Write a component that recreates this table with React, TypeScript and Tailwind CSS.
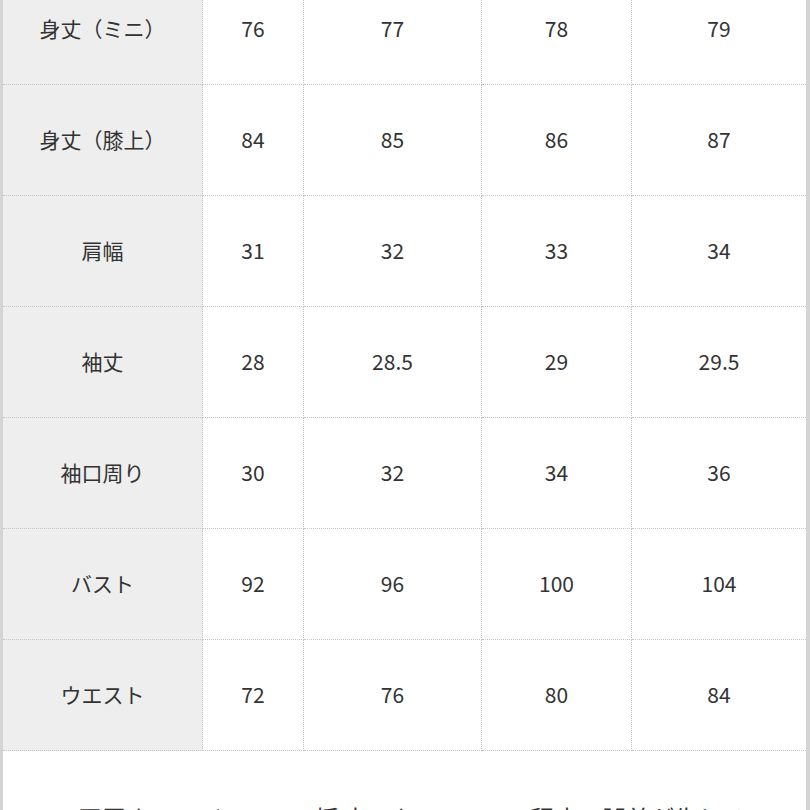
import React from "react";

const rows: { label: string; values: string[] }[] = [
  { label: "身丈（ミニ）", values: ["76", "77", "78", "79"] },
  { label: "身丈（膝上）", values: ["84", "85", "86", "87"] },
  { label: "肩幅", values: ["31", "32", "33", "34"] },
  { label: "袖丈", values: ["28", "28.5", "29", "29.5"] },
  { label: "袖口周り", values: ["30", "32", "34", "36"] },
  { label: "バスト", values: ["92", "96", "100", "104"] },
  { label: "ウエスト", values: ["72", "76", "80", "84"] },
];

export default function App() {
  return (
    <div
      className="w-[810px] h-[810px] overflow-hidden bg-white text-[#333]"
      style={{ fontFamily: '"Noto Sans CJK JP", "Noto Sans", sans-serif' }}
    >
      <div className="-mt-[26px] border-l-[3px] border-r-[4px] border-[#d4d4d4]">
        {/* size table */}
        <div className="grid grid-cols-[200px_101px_178px_150px_174px]">
          {rows.map((row) => (
            <React.Fragment key={row.label}>
              <div className="h-[111px] flex items-center justify-center bg-[#eeeeee] border-r border-b border-dotted border-[#c4c4c4] text-[21px]">
                {row.label}
              </div>
              {row.values.map((v, i) => (
                <div
                  key={i}
                  className={`h-[111px] flex items-center justify-center border-b border-dotted border-[#c4c4c4] text-[21px] ${
                    i < 3 ? "border-r" : ""
                  }`}
                >
                  {v}
                </div>
              ))}
            </React.Fragment>
          ))}
        </div>

        {/* note */}
        <div className="pt-[49px] pl-[75px] pr-[40px] pb-10 text-[24px] leading-[1.5]">
          平置き・メジャーでの採寸ですので、2cm程度の誤差が生じる場合がございます。
        </div>
      </div>
    </div>
  );
}
